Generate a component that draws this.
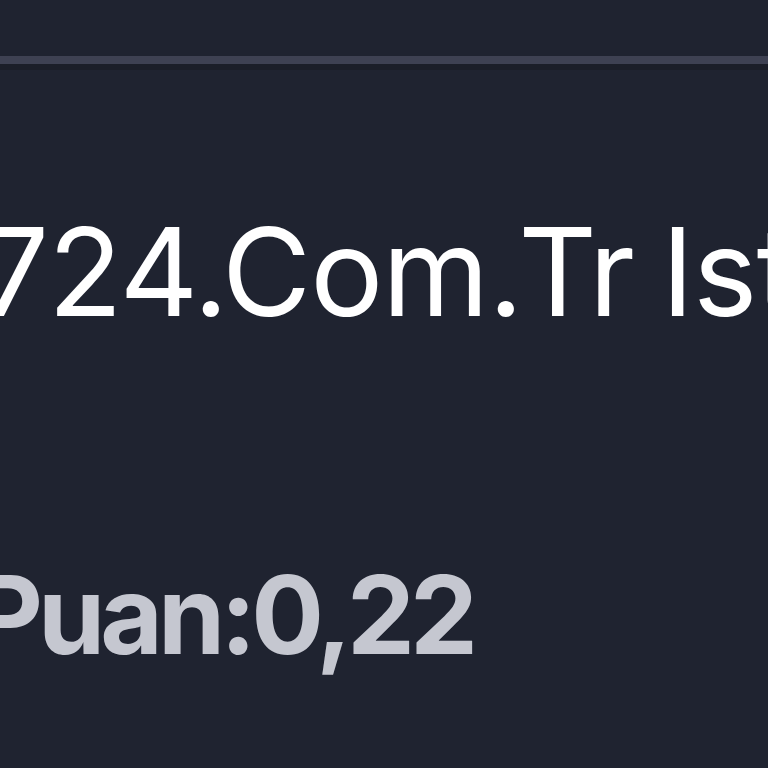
export default function App() {
  return (
    <div className="h-[768px] w-[768px] overflow-hidden bg-[#1f2330] font-['Inter',sans-serif]">
      <div className="h-[56px]" />
      <div className="h-[8px] bg-[#3e4152]" />
      <div className="h-[6px] bg-[#1b1e28]" />
      <div className="mt-[141px] -ml-[20px] whitespace-nowrap text-[122px] leading-none font-normal tracking-[-1px] text-white [word-spacing:-6px]">
        724.Com.Tr Ist
      </div>
      <div className="mt-[228px] -ml-[27px] whitespace-nowrap text-[108px] leading-none font-bold tracking-[-5px] text-[#c5c7d0]">
        Puan:0,22
      </div>
    </div>
  )
}
